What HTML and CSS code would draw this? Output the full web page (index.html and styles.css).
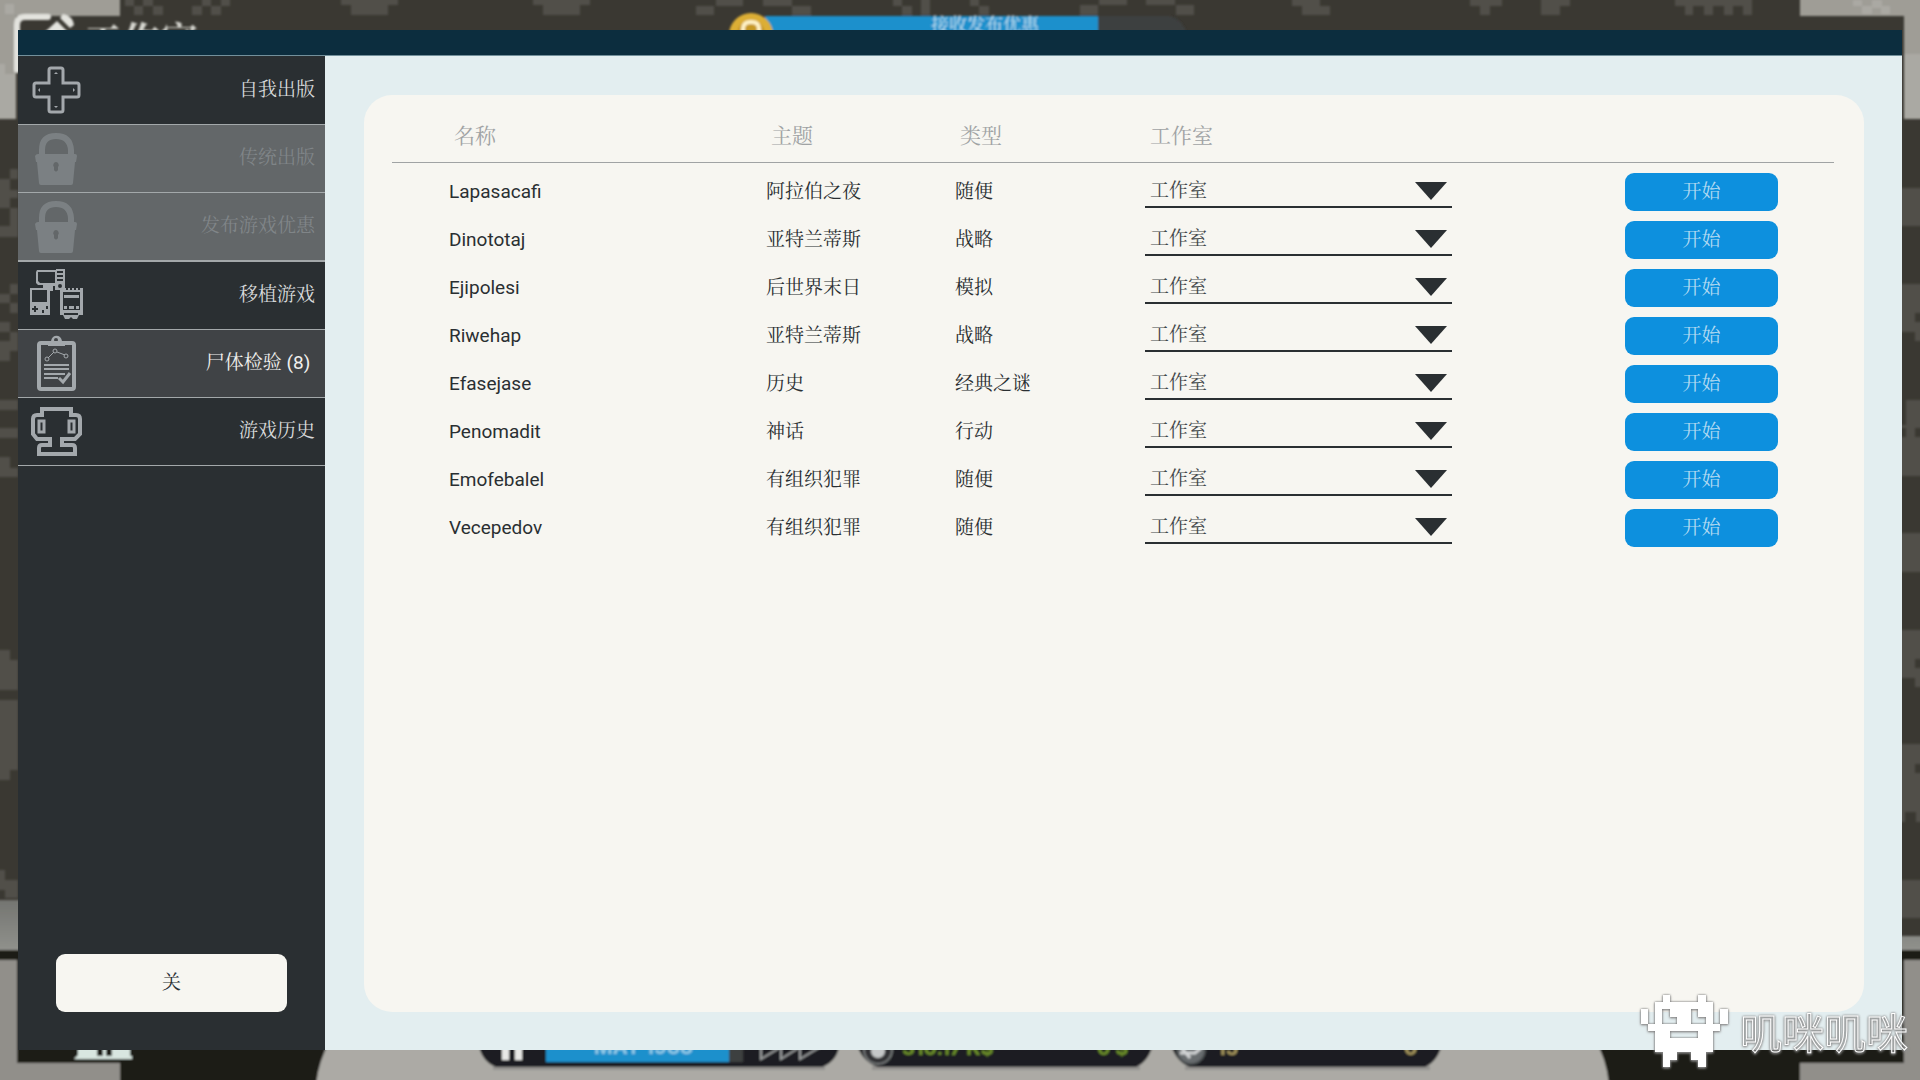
FILE: index.html
```html
<!DOCTYPE html>
<html lang="zh-CN">
<head>
<meta charset="utf-8">
<title>尸体检验</title>
<meta name="viewport" content="width=device-width, initial-scale=1">
<link rel="stylesheet" href="styles.css">
</head>
<body>
<svg class="scene" viewBox="0 0 1920 1080" preserveAspectRatio="none" aria-hidden="true">
  <defs>
    <filter id="soft" x="-5%" y="-5%" width="110%" height="110%"><feGaussianBlur stdDeviation="1"/></filter>
    <linearGradient id="ledge" x1="0" y1="0" x2="0" y2="1"><stop offset="0" stop-color="#747571"/><stop offset="1" stop-color="#90918c"/></linearGradient>
  </defs>
  <rect width="1920" height="1080" fill="#3a3832"/>
  <g filter="url(#soft)">
    <path fill="#9f9d96" d="M-5-5H120V16H16V119H-5zM1800-5H1925V119H1904V16H1800z"/>
    <path fill="#aaa9a3" d="M-5 64H5V74H16V119H-5zM5 4H14V14H5zM1904 54H1925V119H1904zM1853 0H1862V6H1872V0H1882V6H1890V14H1881V8H1872V14H1862V6H1853z"/>
    <path fill="#51504a" d="M125-5H134V6H143V15H134V6H125zM143-5H153V6H163V15H153V6H143zM202-5H211V6H221V-5H230V6H221V15H211V6H202V15H192V6H202zM341-5H398V5H388V15H351V5H341zM533-5H590V5H580V15H543V5H533zM716-5H743V6H714V15H696V6H716zM763-5H792V6H811V15H792V6H763zM893-5H902V6H912V15H902V6H893zM921-5H930V15H921zM970-5H979V6H989V15H979V6H970zM1099-5H1127V5H1098V15H1080V5H1099zM1146-5H1175V5H1194V15H1176V5H1146zM1292-5H1320V6H1330V15H1302V6H1292zM1470-5H1502V6H1490V15H1480V6H1470zM1541-5H1570V6H1560V15H1541zM1675-5H1752V15H1743V6H1733V15H1724V6H1713V15H1704V6H1693V15H1685V6H1675z"/>
    <path fill="#51504a" d="M10 169H18V179H10zM-5 179H10V190H18V198H10V208H-5zM10 208H18V237H-5V226H10zM10 284H18V294H-5V303H18V332H10V341H-5V332H10V322H-5V361H10V351H18V313H10zM10 400H18V410H-5V428H18V438H-5V457H10V468H18V477H-5V650H10V660H18V690H-5V700H18V770H10V780H-5V870H5V880H18V898H5V890H-5V400z"/>
    <path fill="#51504a" d="M1895 188H1925V226H1895zM1895 284H1925V313H1915V322H1925V341H1915V332H1895zM1906 400H1925V428H1915V437H1925V476H1895V437H1906V428H1895V425H1906zM1895 533H1925V572H1895zM1895 630H1925V659H1915V668H1925V687H1915V678H1895zM1895 744H1925V764H1915V773H1925V822H1916V812H1905V822H1895zM1895 880H1925V918H1895z"/>
    <path fill="url(#ledge)" d="M-5 900H30V950H-5zM1895 936H1925V950H1895z"/>
    <path fill="#1e1c17" d="M-5 950H1925V1085H-5z"/>
    <path fill="#918f8a" d="M-5 960H17V1063H120V1085H-5zM1925 960H1904V1063H1800V1085H1925z"/>
    <path fill="#acaaa5" d="M316 1085Q318 1063 330 1040H1595Q1607 1060 1609 1085z"/>
    <path fill="none" stroke="#e3e3de" stroke-width="6" stroke-linecap="round" d="M17 70V25Q17 17 25 17H48"/>
    <path fill="#e3e3de" d="M36 40 57 21 68 32H66L58 40zM63 14Q73 16 74 25L70 28 60 18z"/>
    <path fill="#d8e6e0" d="M78 1042H97V1056H132V1059H74L78 1055zM112 1042H130V1056H112zM103 1042H106V1057H103z"/>
    <text class="scene-title" x="84" y="54">工作室</text>
    <path fill="#1f90cc" d="M765 16H1098V45H765z"/>
    <path fill="#3d3f41" d="M1098 16H1170Q1183 20 1187 34H1098z"/>
    <circle cx="751" cy="35" r="22" fill="#dcae35"/>
    <circle cx="751" cy="34" r="14" fill="#c79927"/>
    <path fill="none" stroke="#fff2c7" stroke-width="4" d="M743 36V29Q743 22 751 22T759 29V36"/>
    <text class="scene-banner" x="931" y="31">接收发布优惠</text>
    <path fill="#949390" d="M493 1066H825V1070H493zM872 1066H1140V1070H872zM1185 1066H1430V1070H1185z"/>
    <path fill="#1c1f21" d="M478 1040H840Q839 1061 822 1067H496Q480 1061 478 1040zM856 1040H1154Q1150 1061 1136 1067H878Q860 1061 856 1040zM1170 1040H1443Q1439 1061 1425 1067H1190Q1174 1061 1170 1040z"/>
    <path fill="#e8e8e6" d="M502 1040H509V1060H502zM515 1040H522V1060H515z"/>
    <path fill="#1f90cc" d="M546 1040H729V1062H546z"/>
    <path fill="#3d3f41" d="M729 1040H743V1062H729z"/>
    <text class="hud-text hud-date" x="594" y="1054">MAY 1988</text>
    <path fill="none" stroke="#999b9c" stroke-width="2" d="M761 1045V1059L781 1047V1059L800 1047V1059L820 1047"/>
    <circle cx="878" cy="1050" r="14" fill="#303335" stroke="#747778" stroke-width="2"/>
    <circle cx="878" cy="1051" r="7" fill="#c5c7c8"/>
    <text class="hud-text hud-money" x="902" y="1055">310.17 K$</text>
    <text class="hud-text hud-money" x="1097" y="1055">0 $</text>
    <circle cx="1191" cy="1050" r="14" fill="#686c6e" stroke="#4b4f51" stroke-width="2"/>
    <path fill="none" stroke="#d1d3d4" stroke-width="3" d="M1180 1053H1195L1201 1048M1181 1047 1190 1058"/>
    <text class="hud-text hud-fans" x="1217" y="1055">15</text>
    <text class="hud-text hud-fans" x="1404" y="1055">0</text>
  </g>
</svg>

<div class="dialog" role="dialog" aria-label="尸体检验">
  <div class="titlebar"></div>
  <div class="dialog-body">
    <aside class="sidebar">
      <nav class="menu">
        <button class="menu-item" type="button">
          <svg class="icon" viewBox="0 0 60 60" aria-hidden="true"><path d="M25 8H35Q37 8 37 10V23H51Q53 23 53 25V35Q53 37 51 37H37V50Q37 52 35 52H25Q23 52 23 50V37H10Q8 37 8 35V25Q8 23 10 23H23V10Q23 8 25 8z" fill="none" stroke="currentColor" stroke-width="3"/><path fill="currentColor" d="M28 14 30 12 32 14zM28 46 30 48 32 46zM14 28 12 30 14 32zM47 28 49 30 47 32z"/></svg>
          <span>自我出版</span>
        </button>
        <button class="menu-item locked" type="button" disabled>
          <svg class="icon" viewBox="0 0 60 60" aria-hidden="true"><path d="M16 28V22Q16 8 30 8T45 22V28" fill="none" stroke="currentColor" stroke-width="6"/><path fill="currentColor" fill-rule="evenodd" d="M12 26H49Q51 26 51 28L50 34H49L47 55Q47 57 45 57H15Q13 57 13 55L11 34H10L9 28Q10 26 12 26zM30 34A3 3 0 0 0 28 39V42Q30 45 32 42V39A3 3 0 0 0 30 34z"/></svg>
          <span>传统出版</span>
        </button>
        <button class="menu-item locked last-locked" type="button" disabled>
          <svg class="icon" viewBox="0 0 60 60" aria-hidden="true"><path d="M16 28V22Q16 8 30 8T45 22V28" fill="none" stroke="currentColor" stroke-width="6"/><path fill="currentColor" fill-rule="evenodd" d="M12 26H49Q51 26 51 28L50 34H49L47 55Q47 57 45 57H15Q13 57 13 55L11 34H10L9 28Q10 26 12 26zM30 34A3 3 0 0 0 28 39V42Q30 45 32 42V39A3 3 0 0 0 30 34z"/></svg>
          <span>发布游戏优惠</span>
        </button>
        <button class="menu-item" type="button">
          <svg class="icon" viewBox="0 0 60 60" aria-hidden="true"><path fill="currentColor" fill-rule="evenodd" d="M11 5H30V4H39V25H29V21H27V26H24V50H4V23H17V20H12L10 18V7zM12 7V16L14 18H29V7zM31 6V8H37V6zM31 10V12H37V10zM31 14V16H37V14zM34 19A2 2 0 1 0 34 23 2 2 0 1 0 34 19zM6 25V37H21V25zM8 41V43H6V45H8V47H10V45H12V43H10V41zM20 41V44H22V41zM16 45V48H18V45z"/><path fill="currentColor" fill-rule="evenodd" d="M34 23H36V25H38V23H40V25H42V23H44V25H46V23H48V25H50V23H52V25H54V23H57V50H53L51 54H47L45 52 43 54H39L37 50H34zM37 27V45H54V27zM38 48V50H52V48z"/><path fill="currentColor" d="M38 30H53V33H38zM38 41H41V44H38zM43 41H48V44H43zM50 41H53V44H50zM37 46H55V48H37z"/></svg>
          <span>移植游戏</span>
        </button>
        <button class="menu-item selected" type="button" aria-current="page">
          <svg class="icon" viewBox="0 0 60 60" aria-hidden="true"><rect x="13" y="10" width="35" height="46" rx="2" fill="none" stroke="currentColor" stroke-width="4"/><path fill="currentColor" fill-rule="evenodd" d="M22 13V10Q23 8 25 8C26 1 35 1 36 8Q38 8 39 10V13zM30 5A2 2 0 1 0 30 9 2 2 0 1 0 30 5z"/><path fill="none" stroke="currentColor" stroke-width="2" d="M18 32H43M18 36H43M18 41H39M18 45H32"/><path fill="none" stroke="currentColor" stroke-width="1" d="M22 25 28 19M31 19 39 22"/><g fill="none" stroke="currentColor"><circle cx="21" cy="26" r="2"/><circle cx="29" cy="18" r="2"/><circle cx="40" cy="23" r="2"/></g><path fill="none" stroke="currentColor" stroke-width="3" d="M33 45 37 49 44 40"/></svg>
          <span>尸体检验 (8)&nbsp;</span>
        </button>
        <button class="menu-item" type="button">
          <svg class="icon" viewBox="0 0 60 60" aria-hidden="true"><path fill="none" stroke="currentColor" stroke-width="4" d="M16 8H45V14H50Q54 14 54 18V33L49 38H36V44H46Q49 44 49 47V53H13V47Q13 44 16 44H24V38H11L7 33V18Q7 14 11 14H16z"/><path fill="none" stroke="currentColor" stroke-width="3" d="M13 20H18V31H13zM43 20H48V31H43z"/></svg>
          <span>游戏历史</span>
        </button>
      </nav>
      <button class="close" type="button">关</button>
    </aside>
    <main class="content">
      <section class="panel">
        <table class="games">
          <colgroup><col class="col-name"><col class="col-theme"><col class="col-genre"><col class="col-studio"><col></colgroup>
          <thead><tr><th scope="col">名称</th><th scope="col">主题</th><th scope="col">类型</th><th scope="col">工作室</th><td></td></tr></thead>
          <tbody>
            <tr><td>Lapasacafi</td><td>阿拉伯之夜</td><td>随便</td><td><select class="studio" aria-label="工作室"><option>工作室</option></select></td><td><button class="start" type="button">开始</button></td></tr>
            <tr><td>Dinototaj</td><td>亚特兰蒂斯</td><td>战略</td><td><select class="studio" aria-label="工作室"><option>工作室</option></select></td><td><button class="start" type="button">开始</button></td></tr>
            <tr><td>Ejipolesi</td><td>后世界末日</td><td>模拟</td><td><select class="studio" aria-label="工作室"><option>工作室</option></select></td><td><button class="start" type="button">开始</button></td></tr>
            <tr><td>Riwehap</td><td>亚特兰蒂斯</td><td>战略</td><td><select class="studio" aria-label="工作室"><option>工作室</option></select></td><td><button class="start" type="button">开始</button></td></tr>
            <tr><td>Efasejase</td><td>历史</td><td>经典之谜</td><td><select class="studio" aria-label="工作室"><option>工作室</option></select></td><td><button class="start" type="button">开始</button></td></tr>
            <tr><td>Penomadit</td><td>神话</td><td>行动</td><td><select class="studio" aria-label="工作室"><option>工作室</option></select></td><td><button class="start" type="button">开始</button></td></tr>
            <tr><td>Emofebalel</td><td>有组织犯罪</td><td>随便</td><td><select class="studio" aria-label="工作室"><option>工作室</option></select></td><td><button class="start" type="button">开始</button></td></tr>
            <tr><td>Vecepedov</td><td>有组织犯罪</td><td>随便</td><td><select class="studio" aria-label="工作室"><option>工作室</option></select></td><td><button class="start" type="button">开始</button></td></tr>
          </tbody>
        </table>
      </section>
    </main>
  </div>
</div>

<div class="watermark">
  <svg class="robot" viewBox="0 0 88 74" aria-hidden="true"><path fill="#fff" fill-rule="evenodd" d="M23 1H30V8H58V1H66V8H73V30H80V15H88V30H80V37H73V58H66V73H58V66H51V58H37V66H30V73H23V58H15V37H8V30H1V15H8V30H15V8H23zM22 15V30H37V23H30V15zM51 15V30H66V23H58V15zM30 37V44H58V37z"/></svg>
  <span class="watermark-text">叽咪叽咪</span>
</div>
</body>
</html>
```

FILE: styles.css
```css
* {
  box-sizing: border-box;
}

body {
  margin: 0;
  min-height: 100vh;
  display: flex;
  padding: 30px 18px;
  background: #3a3832;
  color: #2a2f32;
  font-family: Roboto, "Noto Serif CJK SC", "Noto Sans CJK SC", sans-serif;
  font-size: 19px;
  font-weight: 400;
  line-height: 24px;
}

button,
select {
  font: inherit;
  margin: 0;
  border: 0;
  padding: 0;
  cursor: pointer;
}

/* Game scene behind the dialog */
.scene {
  position: fixed;
  inset: 0;
  width: 100%;
  height: 100%;
}

.scene-title {
  fill: #d5d5cf;
  font-size: 38px;
  font-weight: 700;
}

.scene-banner {
  fill: #c5e2f1;
  font-size: 18px;
}

.hud-text {
  font-family: Inter, sans-serif;
  font-size: 20px;
  font-weight: 700;
}

.hud-date {
  fill: #8fc8e6;
}

.hud-money {
  fill: #6c8f28;
}

.hud-fans {
  fill: #a3935a;
}

/* Dialog */
.dialog {
  position: relative;
  flex: 1;
  display: flex;
  flex-direction: column;
}

.titlebar {
  height: 26px;
  background: #0c2d3e;
  border-bottom: 1px solid #73909b;
}

.dialog-body {
  flex: 1;
  display: flex;
}

.sidebar {
  flex: none;
  width: 307px;
  display: flex;
  flex-direction: column;
  justify-content: space-between;
  background: #2a2f32;
}

.menu {
  display: flex;
  flex-direction: column;
  padding-top: 1px;
}

.menu-item {
  display: flex;
  align-items: center;
  justify-content: space-between;
  height: 68px;
  padding: 0 10px 2px 8px;
  border-bottom: 1px solid #a3a8aa;
  background: transparent;
  color: #d8dadb;
}

.icon {
  width: 60px;
  height: 60px;
  color: #a3a8ac;
}

.menu-item.locked {
  background: #636769;
  color: #808588;
}

.locked .icon {
  color: #7b8083;
}

.menu-item.last-locked {
  height: 69px;
  border-bottom-width: 2px;
}

.menu-item.selected {
  background: #404346;
  color: #f0f0ee;
}

.close {
  height: 58px;
  margin: 38px;
  border-radius: 9px;
  background: #f7f6f1;
  color: #2a2f32;
}

.content {
  flex: 1;
  display: flex;
  padding: 39px 38px 38px 39px;
  background: #e3eef0;
}

.panel {
  flex: 1;
  padding: 19px 30px 19px 28px;
  border-radius: 28px;
  background: #f7f6f1;
}

/* Games table */
.games {
  width: 100%;
  table-layout: fixed;
  border-collapse: collapse;
}

.col-name {
  width: 369px;
}

.col-theme {
  width: 189px;
}

.col-genre {
  width: 190px;
}

.col-studio {
  width: 480px;
}

.games th {
  height: 48px;
  padding: 0 0 3px 10px;
  color: #a0a3a4;
  font-size: 21px;
  font-weight: 400;
  text-align: left;
}

.games thead tr {
  border-bottom: 1px solid #a0a3a4;
}

.games tbody td {
  height: 48px;
  padding: 10px 0 0 5px;
}

.games th:first-child {
  padding-left: 62px;
}

.games tbody td:first-child {
  padding-left: 57px;
}

.studio {
  display: block;
  width: 307px;
  height: 32px;
  padding: 0 5px;
  border-bottom: 2px solid #2a2f32;
  border-radius: 0;
  background: transparent url("data:image/svg+xml,%3Csvg xmlns='http://www.w3.org/2000/svg' width='32' height='18'%3E%3Cpath fill='%232a2f32' d='M0 0H32L16 18z'/%3E%3C/svg%3E") no-repeat right 5px top 6px;
  color: #43484a;
  appearance: none;
}

.start {
  display: block;
  width: 153px;
  height: 38px;
  border-radius: 9px;
  background: #0d90de;
  color: #b4dbf2;
}

/* Watermark */
.watermark {
  position: fixed;
  right: 12px;
  bottom: 12px;
  display: flex;
  align-items: center;
  gap: 12px;
  pointer-events: none;
  filter: drop-shadow(0 0 1px #777) drop-shadow(0 1px 1px #999);
}

.robot {
  width: 88px;
  height: 74px;
}

.watermark-text {
  color: transparent;
  font-family: "Noto Sans CJK SC", sans-serif;
  font-size: 42px;
  line-height: 60px;
  -webkit-text-stroke: 1px #fff;
}
```
